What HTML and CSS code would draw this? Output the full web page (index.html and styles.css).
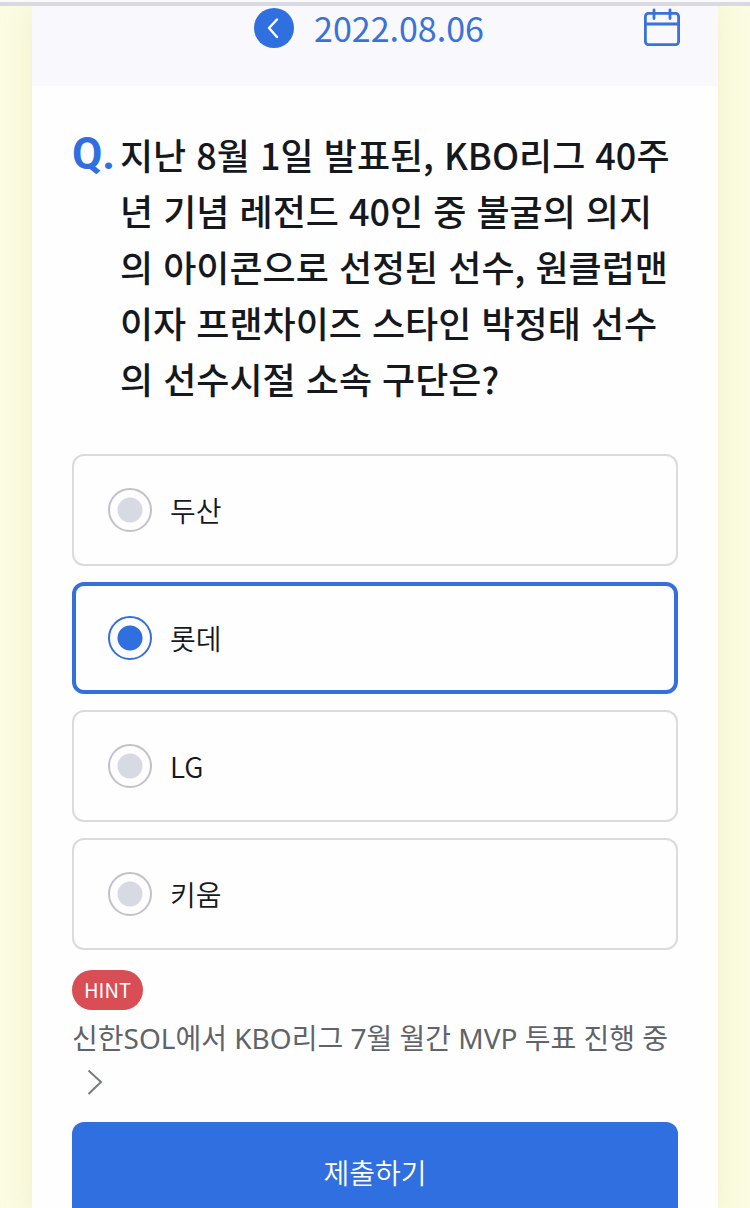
FILE: index.html
```html
<!DOCTYPE html>
<html lang="ko">
<head>
<meta charset="utf-8">
<meta name="viewport" content="width=device-width, initial-scale=1">
<title>퀴즈</title>
<link rel="stylesheet" href="styles.css">
</head>
<body>
<div class="page">
  <main class="card">
    <header class="date-bar">
      <div class="date-nav">
        <button class="icon-button" type="button" aria-label="이전 날짜">
          <svg width="40" height="40" viewBox="0 0 40 40" fill="none">
            <circle cx="20" cy="20" r="20" fill="#306fe0"/>
            <path d="M23 11.500L15 20L23 29" stroke="#fff" stroke-width="2.400" stroke-linecap="round" stroke-linejoin="round"/>
          </svg>
        </button>
        <time class="date" datetime="2022-08-06">2022.08.06</time>
      </div>
      <button class="icon-button calendar" type="button" aria-label="달력">
        <svg width="36" height="38" viewBox="0 0 36 38" fill="none" stroke="#3a72d8" stroke-width="2.800" stroke-linecap="round">
          <rect x="1.400" y="5.400" width="33.200" height="31.200" rx="3"/>
          <path d="M1.400 16H34.600M10 2V10.500M26 2V10.500"/>
        </svg>
      </button>
    </header>
    <form class="quiz">
      <div class="question">
        <span class="question-mark">Q.</span>
        <h1 class="question-text" id="question">지난 8월 1일 발표된, KBO리그 40주년 기념 레전드 40인 중 불굴의 의지의 아이콘으로 선정된 선수, 원클럽맨이자 프랜차이즈 스타인 박정태 선수의 선수시절 소속 구단은?</h1>
      </div>
      <div class="options" role="radiogroup" aria-labelledby="question">
        <label class="option"><input class="radio" type="radio" name="team"><span>두산</span></label>
        <label class="option"><input class="radio" type="radio" name="team" checked><span>롯데</span></label>
        <label class="option"><input class="radio" type="radio" name="team"><span>LG</span></label>
        <label class="option"><input class="radio" type="radio" name="team"><span>키움</span></label>
      </div>
      <div class="hint">
        <span class="hint-badge">HINT</span>
        <a class="hint-link" href="#">신한SOL에서 KBO리그 7월 월간 MVP 투표 진행 중
          <svg class="hint-arrow" width="16" height="26" viewBox="0 0 16 26" fill="none" stroke="#777b80" stroke-width="2"><path d="M1.500 1.500L14 13L1.500 25"/></svg></a>
      </div>
      <button class="submit" type="submit">제출하기</button>
    </form>
  </main>
</div>
</body>
</html>
```
FILE: styles.css
```css
* {
  box-sizing: border-box;
}

body {
  margin: 0;
  color: #15181c;
  font-family: "Noto Sans CJK KR", sans-serif;
}

.page {
  height: 100vh;
  overflow: hidden;
  padding: 0 32px;
  background: #fcfce4;
}

.page::before {
  content: "";
  position: absolute;
  inset: 0 0 auto;
  height: 4px;
  border-top: 2px solid #fafafc;
  background: #d9d9e0;
}

.card {
  min-height: 100%;
  background: #fefefe;
  box-shadow: 0 0 32px rgba(190, 190, 90, 0.2);
}

.date-bar {
  display: grid;
  grid-template-columns: 1fr auto 1fr;
  align-items: start;
  height: 86px;
  padding: 8px 38px 0;
  background: #f8f8fd;
}

.date-nav {
  display: flex;
  grid-column: 2;
  gap: 20px;
  padding-right: 12px;
}

.icon-button {
  display: block;
  padding: 0;
  border: 0;
  background: none;
}

.icon-button svg {
  display: block;
}

.calendar {
  justify-self: end;
}

.date {
  color: #3a72d8;
  font-size: 34px;
  font-weight: 400;
  line-height: 40px;
}

.quiz {
  padding: 40px 40px 0;
}

.question {
  display: flex;
  line-height: 56px;
}

.question-mark {
  flex: 0 0 48px;
  color: #306fe0;
  font-family: Roboto, sans-serif;
  font-size: 44px;
  font-weight: 700;
}

.question-text {
  flex: 1;
  margin: 0;
  font-size: 36px;
  font-weight: 500;
}

.options {
  display: grid;
  gap: 16px;
  margin-top: 48px;
}

.option {
  display: flex;
  align-items: center;
  gap: 18px;
  height: 112px;
  padding: 0 36px;
  border-radius: 12px;
  box-shadow: inset 0 0 0 2px #d9dbe1;
  font-size: 28px;
  font-weight: 350;
}

.option:has(:checked) {
  box-shadow: inset 0 0 0 4px #3570da;
}

.radio {
  appearance: none;
  flex: none;
  width: 44px;
  height: 44px;
  margin: 0;
  border: 2px solid #bfc2ca;
  border-radius: 50%;
  background: radial-gradient(circle, #d7dae2 12px, transparent 13px);
}

.radio:checked {
  border-color: #3570da;
  background: radial-gradient(circle, #306fe0 12px, transparent 13px);
}

.hint {
  margin-top: 20px;
}

.hint-badge {
  display: block;
  width: fit-content;
  padding: 0 12px;
  border-radius: 20px;
  background: #d94d55;
  color: #fff;
  font-size: 20px;
  line-height: 40px;
}

.hint-link {
  display: block;
  margin-top: 6px;
  color: #606369;
  font-family: "Noto Sans", "Noto Sans CJK KR", sans-serif;
  font-size: 28px;
  font-weight: 400;
  line-height: 44px;
  text-decoration: none;
}

.hint-arrow {
  margin-left: 15px;
  vertical-align: -2px;
}

.submit {
  display: block;
  width: 100%;
  height: 100px;
  margin-top: 18px;
  padding: 0;
  border: 0;
  border-radius: 12px;
  background: #306fe0;
  color: #fff;
  font: 350 28px "Noto Sans CJK KR", sans-serif;
}
```
